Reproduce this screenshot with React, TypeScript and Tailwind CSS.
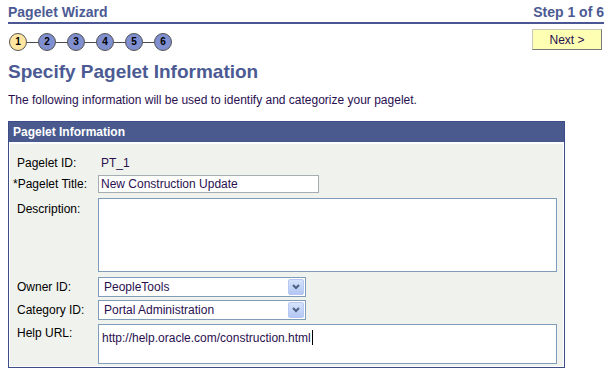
import React from "react";

const FONT = "font-['Liberation_Sans',Arial,sans-serif]";

const STEPS = [1, 2, 3, 4, 5, 6];

function StepTrail() {
  return (
    <div className="flex items-center pt-[4px] pl-[1px]">
      {STEPS.map((n, i) => (
        <div key={n} className="flex items-center">
          {i > 0 && <div className="h-px w-[11px] bg-[#4a4a4a]" />}
          <div
            className={
              "flex h-[18px] w-[18px] items-center justify-center rounded-full border border-[#555] text-[10px] font-bold leading-none text-black " +
              (n === 1 ? "bg-[#ffe6a0]" : "bg-[#7f8fcf]")
            }
          >
            {n}
          </div>
        </div>
      ))}
    </div>
  );
}

function SelectBox({ value }: { value: string }) {
  return (
    <div className="flex h-[20px] w-[208px] items-center justify-between border border-[#7f9db9] bg-white pl-[5px] pr-[1px]">
      <span className="text-[12px] leading-[14px] text-[#2a1050]">{value}</span>
      <div className="flex h-[16px] w-[16px] items-center justify-center rounded-[2px] border border-[#b7c9f2] bg-gradient-to-b from-[#d6e2fc] to-[#b3c6f3]">
        <svg width="8" height="6" viewBox="0 0 8 6">
          <path d="M1 1 L4 4 L7 1" fill="none" stroke="#4d6185" strokeWidth="2" />
        </svg>
      </div>
    </div>
  );
}

export default function App() {
  return (
    <div className={`${FONT} relative h-[376px] w-[610px] overflow-hidden bg-white`}>
      {/* wizard header */}
      <div className="ml-2 mr-[6px] flex items-end justify-between border-b-2 border-[#4a5794] pt-[4px] pb-[2px] text-[14px] font-bold leading-[16px] text-[#4c5a93]">
        <span>Pagelet Wizard</span>
        <span>Step 1 of 6</span>
      </div>

      {/* steps + next */}
      <div className="ml-2 mr-[8px] mt-[5px] flex items-start justify-between">
        <StepTrail />
        <button className="h-[21px] w-[70px] border border-[#c8c8b8] border-b-[#7a7a7a] border-r-[#7a7a7a] bg-[#ffffb4] text-[12px] leading-[14px] text-[#2a1050]">
          Next &gt;
        </button>
      </div>

      <h1 className="ml-2 mt-[10px] text-[19px] font-bold leading-[22px] text-[#4c5a93]">
        Specify Pagelet Information
      </h1>
      <p className="ml-2 mt-[10px] text-[12px] leading-[14px] text-[#2a1050]">
        The following information will be used to identify and categorize your pagelet.
      </p>

      {/* group box */}
      <div className="ml-2 mt-[14px] w-[557px] border border-[#3e4d88] bg-white">
        <div className="h-[20px] bg-[#4a5a8e] pl-[4px] pt-[1px] text-[12px] font-bold leading-[19px] text-white">
          Pagelet Information
        </div>
        <div className="mx-px mb-px mt-[2px] h-[222px] bg-[#f0f2ed] pl-[7px] pt-[12px] text-[12px] leading-[14px] text-black">
          <div className="flex h-[14px]">
            <span className="w-[81px]">Pagelet ID:</span>
            <span className="pl-[3px] text-[#2a1050]">PT_1</span>
          </div>

          <div className="mt-[5px] flex items-center">
            <span className="-ml-[4px] w-[85px]">*Pagelet Title:</span>
            <div className="flex h-[18px] w-[221px] items-center border border-[#a5acb2] bg-white pl-[2px] text-[#2a1050]">
              New Construction Update
            </div>
          </div>

          <div className="mt-[5px] flex items-start">
            <span className="mt-[4px] w-[81px]">Description:</span>
            <div className="h-[74px] w-[459px] border border-[#7f9db9] bg-white" />
          </div>

          <div className="mt-[5px] flex items-center">
            <span className="w-[81px]">Owner ID:</span>
            <SelectBox value="PeopleTools" />
          </div>

          <div className="mt-[3px] flex items-center">
            <span className="w-[81px]">Category ID:</span>
            <SelectBox value="Portal Administration" />
          </div>

          <div className="mt-[4px] flex items-start">
            <span className="mt-[2px] w-[81px]">Help URL:</span>
            <div className="h-[40px] w-[459px] border border-[#7f9db9] bg-white pl-[3px] pt-[2px] text-[#2a1050]">
              http://help.oracle.com/construction.html
              <span className="ml-px inline-block h-[15px] w-px translate-y-[3px] bg-black" />
            </div>
          </div>
        </div>
      </div>
    </div>
  );
}
